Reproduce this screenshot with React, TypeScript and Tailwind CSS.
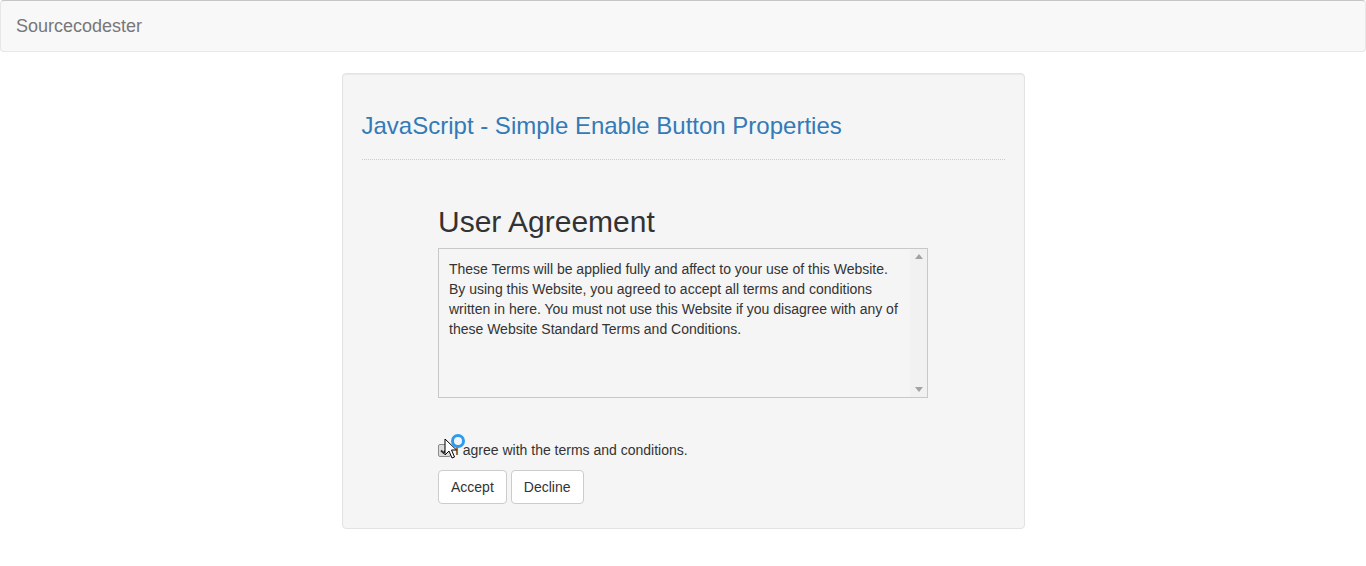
import React from "react";

const TERMS =
  "These Terms will be applied fully and affect to your use of this Website. By using this Website, you agreed to accept all terms and conditions written in here. You must not use this Website if you disagree with any of these Website Standard Terms and Conditions.";

export default function App() {
  return (
    <div className="min-h-[566px] bg-white text-[14px] leading-[20px] text-[#333]" style={{ fontFamily: '"Liberation Sans", Arial, sans-serif' }}>
      <nav className="flex h-[52px] items-center rounded-[4px] border border-[#e7e7e7] border-t-[#c6c6c6] bg-[#f8f8f8] px-[15px]">
        <span className="text-[18px] leading-[20px] text-[#777]">Sourcecodester</span>
      </nav>

      <div className="mx-auto mt-[21px] w-[683px] rounded-[4px] border border-[#e3e3e3] bg-[#f5f5f5] px-[19px] pb-[24px] pt-[19px] shadow-[inset_0_1px_1px_rgba(0,0,0,0.05)]">
        <h3 className="mt-[20px] text-[24px] leading-[26px] text-[#337ab7]">JavaScript - Simple Enable Button Properties</h3>
        <hr className="mt-[20px] border-0 border-t border-dotted border-[#ccc]" />

        <div className="mx-auto mt-[45px] w-[490px]">
          <h2 className="text-[30px] leading-[33px] text-[#333]">User Agreement</h2>

          <div className="mt-[10px] flex h-[150px] border border-[#c8c8c8] bg-[#f5f5f5]">
            <div className="flex-1 overflow-hidden px-[10px] pt-[10px] pr-[4px]">{TERMS}</div>
            <div className="flex w-[17px] flex-col items-center justify-between bg-[#f1f1f1] py-[5px]">
              <svg width="8" height="5" viewBox="0 0 8 5"><path d="M4 0 L8 5 L0 5 Z" fill="#a3a3a3" /></svg>
              <svg width="8" height="5" viewBox="0 0 8 5"><path d="M0 0 L8 0 L4 5 Z" fill="#a3a3a3" /></svg>
            </div>
          </div>

          <div className="relative mt-[42px] flex items-center">
            <span className="flex h-[13px] w-[13px] items-center justify-center rounded-[2px] border border-[#8a8a8a] bg-[#dcdcdc]">
              <svg width="9" height="9" viewBox="0 0 9 9"><path d="M1 4.5 L3.5 7 L8 1.5" fill="none" stroke="#333" strokeWidth="1.8" /></svg>
            </span>
            <span className="ml-[4px]">I agree with the terms and conditions.</span>
            <svg className="absolute left-[6px] top-[-6px]" width="24" height="28" viewBox="0 0 24 28">
              <circle cx="14" cy="7" r="5.5" fill="none" stroke="#2f9bf0" strokeWidth="3" />
              <path d="M1 5 L1 21 L5 17 L8 24 L10.5 23 L7.5 16 L12.5 16 Z" fill="#fff" stroke="#000" strokeWidth="1" strokeLinejoin="round" />
            </svg>
          </div>

          <div className="mt-[10px] flex gap-[4px]">
            <button type="button" className="h-[34px] rounded-[4px] border border-[#ccc] bg-white px-[12px] text-[#333]">Accept</button>
            <button type="button" className="h-[34px] rounded-[4px] border border-[#ccc] bg-white px-[12px] text-[#333]">Decline</button>
          </div>
        </div>
      </div>
    </div>
  );
}
